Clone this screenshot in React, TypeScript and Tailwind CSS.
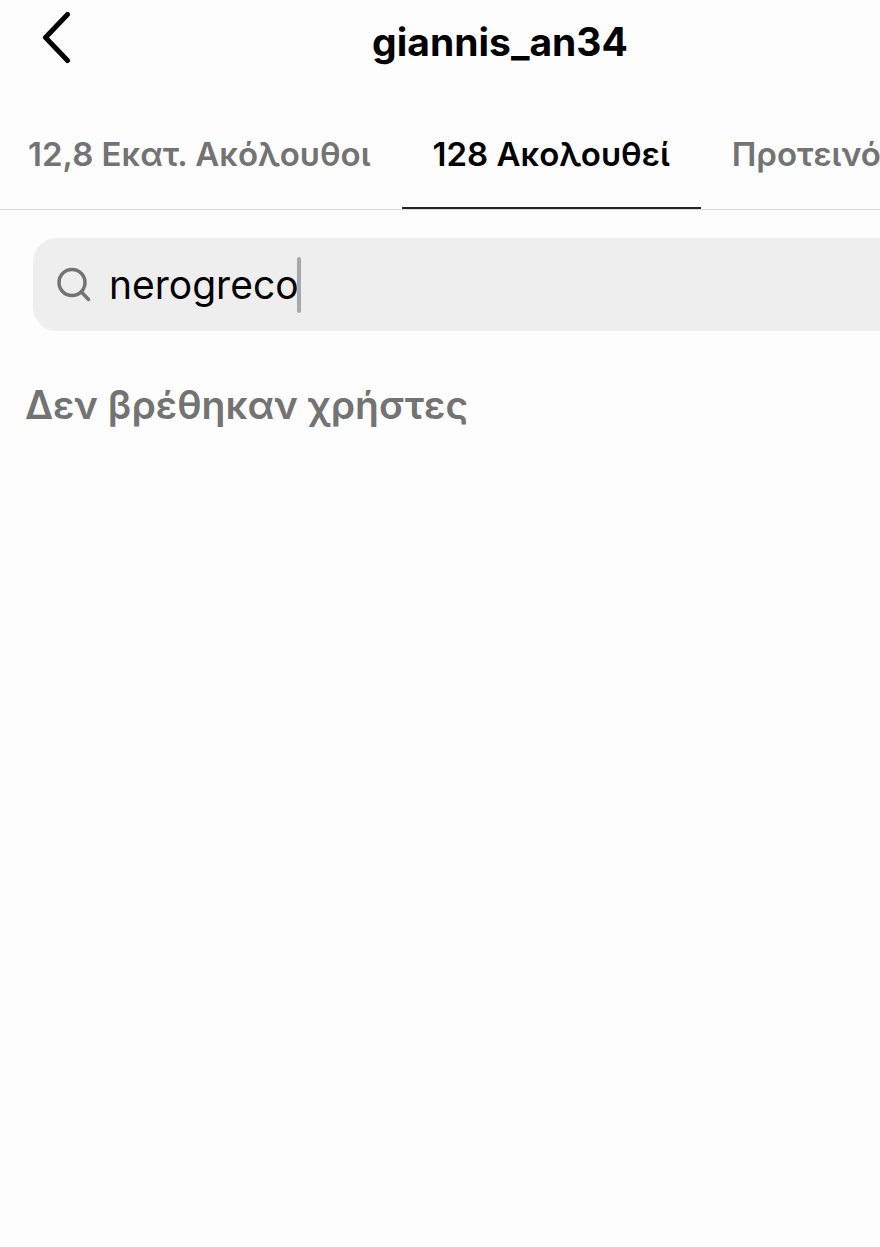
import { useState } from "react";
import clsx from "clsx";

const tabs = [
  { id: "followers", label: "12,8 Εκατ. Ακόλουθοι" },
  { id: "following", label: "128 Ακολουθεί" },
  { id: "suggested", label: "Προτεινό" },
];

function BackIcon() {
  return (
    <svg viewBox="0 0 30 52" className="h-[52px] w-[30px]" fill="none" stroke="currentColor" strokeWidth={5} strokeLinecap="round" strokeLinejoin="round" aria-hidden="true">
      <path d="M26.500 2.500 4.500 25.500l22 23" />
    </svg>
  );
}

function SearchIcon() {
  return (
    <svg viewBox="0 0 34 36" className="h-9 w-[34px] shrink-0 text-[#737373]" fill="none" stroke="currentColor" strokeWidth={3.5} strokeLinecap="round" aria-hidden="true">
      <circle cx="15" cy="15.500" r="13" />
      <path d="m24.500 25 7 7.500" />
    </svg>
  );
}

export default function App() {
  const [active, setActive] = useState("following");
  const [query, setQuery] = useState("nerogreco");

  return (
    <div className="min-h-screen overflow-hidden bg-[#fdfdfd] font-['Inter',sans-serif] text-black">
      <header className="flex h-[100px] items-start">
        <button type="button" aria-label="Πίσω" className="w-[120px] shrink-0 pt-3 pl-[41px]">
          <BackIcon />
        </button>
        <h1 className="flex-1 pt-4 text-center text-[39px] leading-[52px] font-bold">giannis_an34</h1>
      </header>

      <nav role="tablist" className="flex h-[110px] overflow-hidden border-b border-[#dbdbdb] whitespace-nowrap">
        {tabs.map((tab) => (
          <button
            key={tab.id}
            type="button"
            role="tab"
            aria-selected={tab.id === active}
            onClick={() => setActive(tab.id)}
            className={clsx(
              "shrink-0 border-b-2 pl-[31px] text-[33px] leading-[48px] font-semibold not-last:pr-[31px] first:pl-7",
              tab.id === active ? "border-[#262626] text-black" : "border-transparent text-[#737373]"
            )}
          >
            {tab.label}
          </button>
        ))}
      </nav>

      <main className="pt-7">
        <label className="ml-[33px] flex h-[93px] items-center rounded-l-3xl bg-[#eeeeee] pl-6">
          <SearchIcon />
          <input
            type="text"
            aria-label="Αναζήτηση"
            value={query}
            onChange={(e) => setQuery(e.target.value)}
            className="ml-[18px] field-sizing-content text-[39px] leading-[52px] caret-transparent outline-none"
          />
          <span className="-ml-0.5 h-14 w-1 rounded-sm bg-[#a8a8a8]" />
        </label>

        <p className="mt-12 pl-[25px] text-[39px] leading-[52px] font-semibold text-[#737373]">Δεν βρέθηκαν χρήστες</p>
      </main>
    </div>
  );
}
